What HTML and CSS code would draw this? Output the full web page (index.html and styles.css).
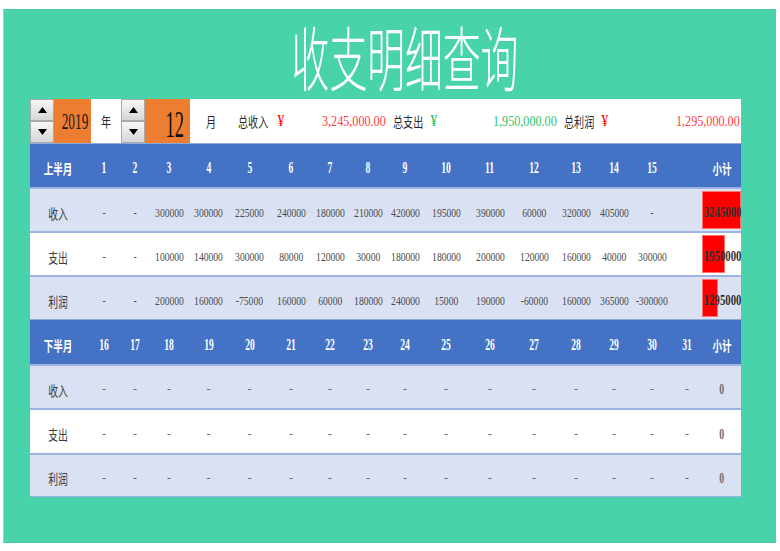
FILE: index.html
```html
<!DOCTYPE html>
<html lang="zh-CN">
<head>
<meta charset="utf-8">
<title>收支明细查询</title>
<link rel="stylesheet" href="styles.css">
</head>
<body>
<div class="frame">
  <h1 class="title"><span>收支明细查询</span></h1>
  <div class="sheet">
    <div class="ctrl">
      <div class="spin">
        <div class="btn"><svg width="9" height="6" viewBox="0 0 9 6"><polygon points="0,6 9,6 4.5,0" fill="#000"/></svg></div>
        <div class="btn"><svg width="9" height="6" viewBox="0 0 9 6"><polygon points="0,0 9,0 4.5,6" fill="#000"/></svg></div>
      </div>
      <div class="orange year"><span class="yv">2019</span></div>
      <div class="unit u-year"><span class="cj">年</span></div>
      <div class="spin">
        <div class="btn"><svg width="9" height="6" viewBox="0 0 9 6"><polygon points="0,6 9,6 4.5,0" fill="#000"/></svg></div>
        <div class="btn"><svg width="9" height="6" viewBox="0 0 9 6"><polygon points="0,0 9,0 4.5,6" fill="#000"/></svg></div>
      </div>
      <div class="orange month"><span class="mv">12</span></div>
      <div class="unit u-month"><span class="cj">月</span></div>
      <div class="lbl l1"><span class="cj">总收入</span></div>
      <div class="yen y1"><span class="ys red">¥</span></div>
      <div class="amt a1"><span class="av red2">3,245,000.00</span></div>
      <div class="lbl l2"><span class="cj">总支出</span></div>
      <div class="yen y2"><span class="ys green">¥</span></div>
      <div class="amt a2"><span class="av green2">1,950,000.00</span></div>
      <div class="lbl l3"><span class="cj">总利润</span></div>
      <div class="yen y3"><span class="ys red">¥</span></div>
      <div class="amt a3"><span class="av red2">1,295,000.00</span></div>
    </div>

    <div class="row head">
      <div class="c"><span class="hc">上半月</span></div>
      <div class="c"><span class="hn">1</span></div>
      <div class="c"><span class="hn">2</span></div>
      <div class="c"><span class="hn">3</span></div>
      <div class="c"><span class="hn">4</span></div>
      <div class="c"><span class="hn">5</span></div>
      <div class="c"><span class="hn">6</span></div>
      <div class="c"><span class="hn">7</span></div>
      <div class="c"><span class="hn">8</span></div>
      <div class="c"><span class="hn">9</span></div>
      <div class="c"><span class="hn">10</span></div>
      <div class="c"><span class="hn">11</span></div>
      <div class="c"><span class="hn">12</span></div>
      <div class="c"><span class="hn">13</span></div>
      <div class="c"><span class="hn">14</span></div>
      <div class="c"><span class="hn">15</span></div>
      <div class="c"></div>
      <div class="c"><span class="hc">小计</span></div>
    </div>

    <div class="row light">
      <div class="c"><span class="dc">收入</span></div>
      <div class="c"><span class="dn">-</span></div>
      <div class="c"><span class="dn">-</span></div>
      <div class="c"><span class="dn">300000</span></div>
      <div class="c"><span class="dn">300000</span></div>
      <div class="c"><span class="dn">225000</span></div>
      <div class="c"><span class="dn">240000</span></div>
      <div class="c"><span class="dn">180000</span></div>
      <div class="c"><span class="dn">210000</span></div>
      <div class="c"><span class="dn">420000</span></div>
      <div class="c"><span class="dn">195000</span></div>
      <div class="c"><span class="dn">390000</span></div>
      <div class="c"><span class="dn">60000</span></div>
      <div class="c"><span class="dn">320000</span></div>
      <div class="c"><span class="dn">405000</span></div>
      <div class="c"><span class="dn">-</span></div>
      <div class="c"></div>
      <div class="c total"><div class="bar" style="width:100%"></div><span class="tn">3245000</span></div>
    </div>

    <div class="row white">
      <div class="c"><span class="dc">支出</span></div>
      <div class="c"><span class="dn">-</span></div>
      <div class="c"><span class="dn">-</span></div>
      <div class="c"><span class="dn">100000</span></div>
      <div class="c"><span class="dn">140000</span></div>
      <div class="c"><span class="dn">300000</span></div>
      <div class="c"><span class="dn">80000</span></div>
      <div class="c"><span class="dn">120000</span></div>
      <div class="c"><span class="dn">30000</span></div>
      <div class="c"><span class="dn">180000</span></div>
      <div class="c"><span class="dn">180000</span></div>
      <div class="c"><span class="dn">200000</span></div>
      <div class="c"><span class="dn">120000</span></div>
      <div class="c"><span class="dn">160000</span></div>
      <div class="c"><span class="dn">40000</span></div>
      <div class="c"><span class="dn">300000</span></div>
      <div class="c"></div>
      <div class="c total"><div class="bar" style="width:60%"></div><span class="tn">1950000</span></div>
    </div>

    <div class="row light">
      <div class="c"><span class="dc">利润</span></div>
      <div class="c"><span class="dn">-</span></div>
      <div class="c"><span class="dn">-</span></div>
      <div class="c"><span class="dn">200000</span></div>
      <div class="c"><span class="dn">160000</span></div>
      <div class="c"><span class="dn">-75000</span></div>
      <div class="c"><span class="dn">160000</span></div>
      <div class="c"><span class="dn">60000</span></div>
      <div class="c"><span class="dn">180000</span></div>
      <div class="c"><span class="dn">240000</span></div>
      <div class="c"><span class="dn">15000</span></div>
      <div class="c"><span class="dn">190000</span></div>
      <div class="c"><span class="dn">-60000</span></div>
      <div class="c"><span class="dn">160000</span></div>
      <div class="c"><span class="dn">365000</span></div>
      <div class="c"><span class="dn">-300000</span></div>
      <div class="c"></div>
      <div class="c total"><div class="bar" style="width:40%"></div><span class="tn">1295000</span></div>
    </div>

    <div class="row head tall">
      <div class="c"><span class="hc">下半月</span></div>
      <div class="c"><span class="hn">16</span></div>
      <div class="c"><span class="hn">17</span></div>
      <div class="c"><span class="hn">18</span></div>
      <div class="c"><span class="hn">19</span></div>
      <div class="c"><span class="hn">20</span></div>
      <div class="c"><span class="hn">21</span></div>
      <div class="c"><span class="hn">22</span></div>
      <div class="c"><span class="hn">23</span></div>
      <div class="c"><span class="hn">24</span></div>
      <div class="c"><span class="hn">25</span></div>
      <div class="c"><span class="hn">26</span></div>
      <div class="c"><span class="hn">27</span></div>
      <div class="c"><span class="hn">28</span></div>
      <div class="c"><span class="hn">29</span></div>
      <div class="c"><span class="hn">30</span></div>
      <div class="c"><span class="hn">31</span></div>
      <div class="c"><span class="hc">小计</span></div>
    </div>

    <div class="row light">
      <div class="c"><span class="dc">收入</span></div>
      <div class="c"><span class="dash">-</span></div>
      <div class="c"><span class="dash">-</span></div>
      <div class="c"><span class="dash">-</span></div>
      <div class="c"><span class="dash">-</span></div>
      <div class="c"><span class="dash">-</span></div>
      <div class="c"><span class="dash">-</span></div>
      <div class="c"><span class="dash">-</span></div>
      <div class="c"><span class="dash">-</span></div>
      <div class="c"><span class="dash">-</span></div>
      <div class="c"><span class="dash">-</span></div>
      <div class="c"><span class="dash">-</span></div>
      <div class="c"><span class="dash">-</span></div>
      <div class="c"><span class="dash">-</span></div>
      <div class="c"><span class="dash">-</span></div>
      <div class="c"><span class="dash">-</span></div>
      <div class="c"><span class="dash">-</span></div>
      <div class="c"><span class="zn">0</span></div>
    </div>

    <div class="row white tall">
      <div class="c"><span class="dc">支出</span></div>
      <div class="c"><span class="dash">-</span></div>
      <div class="c"><span class="dash">-</span></div>
      <div class="c"><span class="dash">-</span></div>
      <div class="c"><span class="dash">-</span></div>
      <div class="c"><span class="dash">-</span></div>
      <div class="c"><span class="dash">-</span></div>
      <div class="c"><span class="dash">-</span></div>
      <div class="c"><span class="dash">-</span></div>
      <div class="c"><span class="dash">-</span></div>
      <div class="c"><span class="dash">-</span></div>
      <div class="c"><span class="dash">-</span></div>
      <div class="c"><span class="dash">-</span></div>
      <div class="c"><span class="dash">-</span></div>
      <div class="c"><span class="dash">-</span></div>
      <div class="c"><span class="dash">-</span></div>
      <div class="c"><span class="dash">-</span></div>
      <div class="c"><span class="zn">0</span></div>
    </div>

    <div class="row light last">
      <div class="c"><span class="dc">利润</span></div>
      <div class="c"><span class="dash">-</span></div>
      <div class="c"><span class="dash">-</span></div>
      <div class="c"><span class="dash">-</span></div>
      <div class="c"><span class="dash">-</span></div>
      <div class="c"><span class="dash">-</span></div>
      <div class="c"><span class="dash">-</span></div>
      <div class="c"><span class="dash">-</span></div>
      <div class="c"><span class="dash">-</span></div>
      <div class="c"><span class="dash">-</span></div>
      <div class="c"><span class="dash">-</span></div>
      <div class="c"><span class="dash">-</span></div>
      <div class="c"><span class="dash">-</span></div>
      <div class="c"><span class="dash">-</span></div>
      <div class="c"><span class="dash">-</span></div>
      <div class="c"><span class="dash">-</span></div>
      <div class="c"><span class="dash">-</span></div>
      <div class="c"><span class="zn">0</span></div>
    </div>
  </div>
</div>
</body>
</html>
```
FILE: styles.css
```css
html, body {
  margin: 0;
  padding: 0;
  background: #ffffff;
}
body {
  width: 780px;
  height: 551px;
  overflow: hidden;
  font-family: "Liberation Serif", "Noto Sans CJK SC", serif;
}
.frame {
  margin: 9px 4px 0 3px;
  height: 534px;
  background: #48d3ab;
  padding: 0 35px 0 26px;
  box-sizing: border-box;
  border-left: 1px solid #7fe0c4;
}
.title {
  margin: 0;
  height: 90px;
  display: flex;
  justify-content: center;
  align-items: center;
  padding: 3px 0 0 38px;
  box-sizing: border-box;
  font: 300 70px/1 "Noto Sans CJK SC", sans-serif;
  color: #ffffff;
}
.title span {
  display: inline-block;
  transform: scaleX(0.54);
  white-space: nowrap;
}
.sheet {
  width: 711px;
}

/* control row */
.ctrl {
  display: flex;
  height: 44px;
  background: #ffffff;
  align-items: stretch;
}
.spin {
  width: 24px;
  display: flex;
  flex-direction: column;
  flex: none;
}
.btn {
  flex: 1;
  display: flex;
  align-items: center;
  justify-content: center;
  background: linear-gradient(#f7f7f7, #d6d6d6);
  border: 1px solid #a8a8a8;
  box-sizing: border-box;
}
.orange {
  background: #ed7d31;
  display: flex;
  align-items: center;
  flex: none;
}
.year {
  width: 37px;
  justify-content: center;
  padding-left: 4px;
  box-sizing: border-box;
}
.yv {
  display: inline-block;
  font-size: 23px;
  color: #1a1a1a;
  transform: scaleX(0.58);
  padding-top: 2px;
}
.month {
  width: 45px;
  justify-content: flex-end;
  padding-right: 6px;
  box-sizing: border-box;
}
.mv {
  display: inline-block;
  font-size: 37px;
  color: #111;
  transform: scaleX(0.5);
  transform-origin: right center;
  padding-top: 6px;
}
.unit, .lbl, .yen, .amt {
  display: flex;
  align-items: center;
  flex: none;
}
.unit { justify-content: center; }
.u-year { width: 30px; }
.u-month { width: 42px; box-sizing: border-box; }
.cj {
  display: inline-block;
  font: 14px "Noto Sans CJK SC", sans-serif;
  color: #2a2a2a;
  transform: scaleX(0.72);
  transform-origin: left center;
  white-space: nowrap;
}
.unit .cj { transform-origin: center; }
.lbl { padding-left: 6px; box-sizing: border-box; }
.l1 { width: 40px; }
.l2 { width: 38px; padding-left: 5px; }
.l3 { width: 40px; padding-left: 5px; }
.yen { justify-content: flex-start; box-sizing: border-box; }
.y1 { width: 20px; padding-left: 5px; }
.y2 { width: 16px; padding-left: 4px; }
.y3 { width: 18px; padding-left: 2px; }
.ys {
  display: inline-block;
  font-size: 16px;
  transform: scaleX(0.85);
}
.red { color: #ff0000; }
.green { color: #1fbf5a; }
.amt {
  justify-content: flex-end;
  padding-right: 2px;
  box-sizing: border-box;
}
.a1 { width: 96px; }
.a2 { width: 117px; }
.a3 { flex: 1; padding-right: 1px; }
.av {
  display: inline-block;
  font-size: 15px;
  transform: scaleX(0.81);
  transform-origin: right center;
  white-space: nowrap;
}
.red2 { color: #ff3d3d; }
.green2 { color: #2fc46a; }

/* grid rows */
.row {
  display: grid;
  grid-template-columns: 56px 36px 26px 42px 37px 45px 38px 40px 36px 38px 44px 44px 44px 40px 36px 40px 30px 39px;
  height: 44px;
  box-sizing: border-box;
  align-items: center;
}
.row.tall { height: 45px; }
.head {
  background: #4472c4;
  border-top: 1px solid #8eaadb;
}
.light {
  background: #d9e1f2;
  border-top: 2px solid #9db3e3;
}
.white {
  background: #ffffff;
  border-top: 2px solid #9db3e3;
}
.last { border-bottom: 1px solid #9db3e3; }
.c {
  text-align: center;
  white-space: nowrap;
  padding-top: 5px;
  position: relative;
  height: 100%;
  box-sizing: border-box;
  display: flex;
  align-items: center;
  justify-content: center;
}
.hn {
  display: inline-block;
  font: bold 16px "Liberation Serif", serif;
  color: #ffffff;
  transform: scaleX(0.6);
}
.hc {
  display: inline-block;
  font: bold 14px "Noto Sans CJK SC", sans-serif;
  color: #ffffff;
  transform: scaleX(0.68);
}
.dc {
  display: inline-block;
  font: 14px "Noto Sans CJK SC", sans-serif;
  color: #3a3a3a;
  transform: scaleX(0.7);
}
.dn {
  display: inline-block;
  font-size: 13px;
  color: #4a4a4a;
  transform: scaleX(0.74);
}
.dash {
  display: inline-block;
  font-size: 12px;
  color: #6a6a6a;
}
.zn {
  display: inline-block;
  font: bold 15px "Liberation Serif", serif;
  color: #6a6a6a;
  transform: scaleX(0.65);
}
.total {
  justify-content: flex-end;
  padding-right: 0;
}
.bar {
  position: absolute;
  left: 0;
  top: 2px;
  bottom: 2px;
  background: #ff0000;
  border: 1px solid #ff7070;
  box-sizing: border-box;
}
.tn {
  position: relative;
  display: inline-block;
  font: bold 15px "Liberation Serif", serif;
  color: #303030;
  transform: scaleX(0.72);
  transform-origin: right center;
}
```
